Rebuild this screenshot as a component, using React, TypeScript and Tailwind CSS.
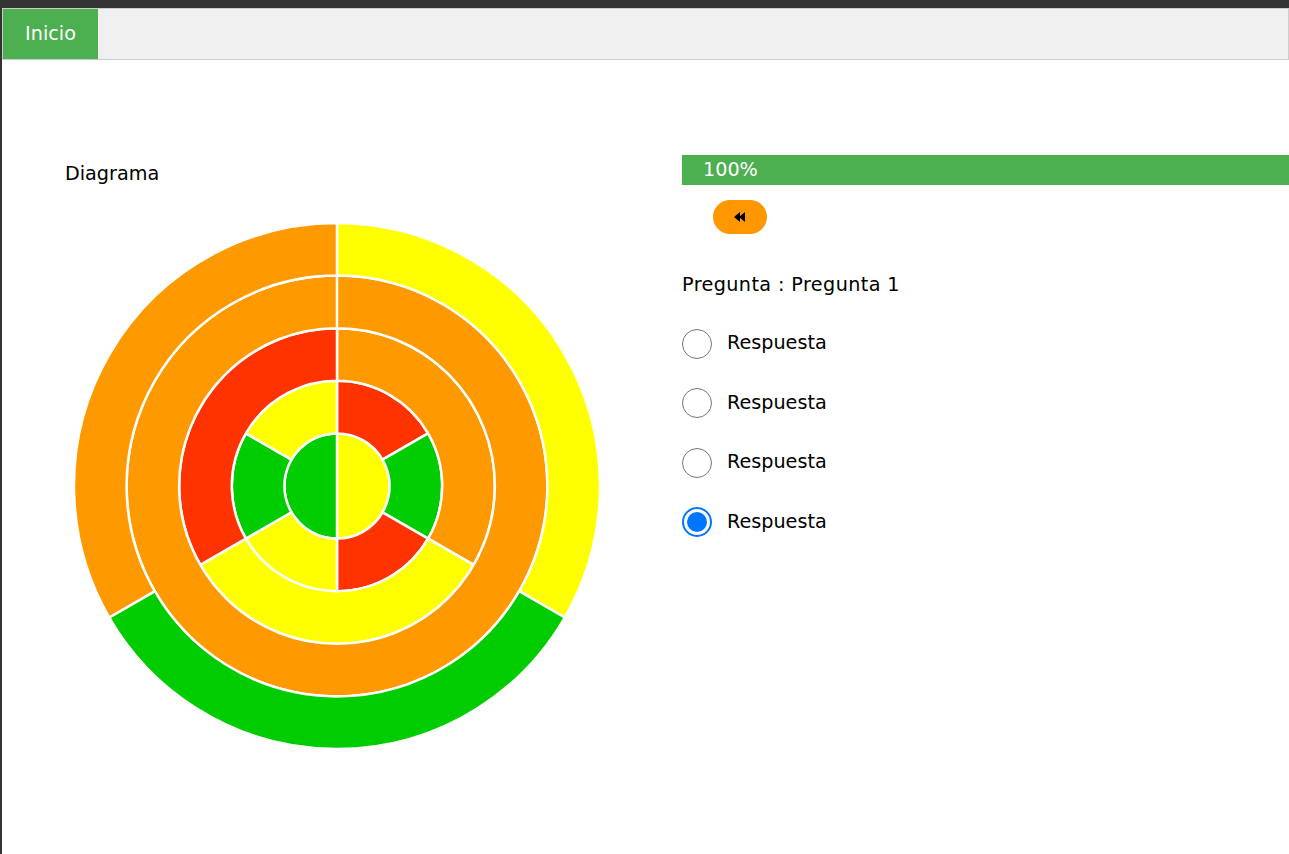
import React from "react";

const C = { o: "#ff9900", y: "#ffff00", r: "#ff3300", g: "#00cc00" };

function pt(r: number, deg: number, cx: number, cy: number) {
  const a = (deg * Math.PI) / 180;
  return [cx + r * Math.sin(a), cy - r * Math.cos(a)];
}

function arcPath(r0: number, r1: number, a0: number, a1: number, cx: number, cy: number) {
  if (a1 - a0 >= 360) {
    const [x0, y0] = pt(r1, 0, cx, cy);
    const [x1, y1] = pt(r1, 180, cx, cy);
    const [x2, y2] = pt(r0, 0, cx, cy);
    const [x3, y3] = pt(r0, 180, cx, cy);
    return `M${x0},${y0} A${r1},${r1} 0 1 1 ${x1},${y1} A${r1},${r1} 0 1 1 ${x0},${y0} L${x2},${y2} A${r0},${r0} 0 1 0 ${x3},${y3} A${r0},${r0} 0 1 0 ${x2},${y2} Z`;
  }
  const large = a1 - a0 > 180 ? 1 : 0;
  const [ox0, oy0] = pt(r1, a0, cx, cy);
  const [ox1, oy1] = pt(r1, a1, cx, cy);
  if (r0 <= 0) {
    return `M${cx},${cy} L${ox0},${oy0} A${r1},${r1} 0 ${large} 1 ${ox1},${oy1} Z`;
  }
  const [ix1, iy1] = pt(r0, a1, cx, cy);
  const [ix0, iy0] = pt(r0, a0, cx, cy);
  return `M${ox0},${oy0} A${r1},${r1} 0 ${large} 1 ${ox1},${oy1} L${ix1},${iy1} A${r0},${r0} 0 ${large} 0 ${ix0},${iy0} Z`;
}

const W = 52.6;
const rings: [number, number, string][][] = [
  [
    [0, 180, C.y],
    [180, 360, C.g],
  ],
  [
    [0, 60, C.r],
    [60, 120, C.g],
    [120, 180, C.r],
    [180, 240, C.y],
    [240, 300, C.g],
    [300, 360, C.y],
  ],
  [
    [0, 120, C.o],
    [120, 240, C.y],
    [240, 360, C.r],
  ],
  [[0, 360, C.o]],
  [
    [0, 120, C.y],
    [120, 240, C.g],
    [240, 360, C.o],
  ],
];

function Chart() {
  const cx = 270;
  const cy = 270;
  return (
    <svg width={540} height={540} viewBox="0 0 540 540">
      {rings.map((ring, i) =>
        ring.map(([a0, a1, col], j) => (
          <path
            key={`${i}-${j}`}
            d={arcPath(i * W, (i + 1) * W, a0, a1, cx, cy)}
            fill={col}
            stroke="#ffffff"
            strokeWidth={2.5}
            strokeLinejoin="round"
          />
        ))
      )}
    </svg>
  );
}

function Radio({ checked }: { checked?: boolean }) {
  if (checked) {
    return (
      <span className="flex h-[30px] w-[30px] items-center justify-center rounded-full border-[2px] border-[#0075ff] bg-white">
        <span className="h-[20px] w-[20px] rounded-full bg-[#0075ff]" />
      </span>
    );
  }
  return <span className="block h-[30px] w-[30px] rounded-full border border-[#767676] bg-white" />;
}

export default function App() {
  return (
    <div
      className="h-[854px] w-[1289px] overflow-hidden border-l-2 border-t-8 border-[#333333] bg-white text-black"
      style={{ fontFamily: '"DejaVu Sans", Verdana, sans-serif' }}
    >
      <div className="flex h-[52px] border border-[#cccccc] bg-[#f0f0f0]">
        <div className="flex h-[50px] w-[95px] items-center justify-center bg-[#4caf50] text-[19.2px] text-white">
          Inicio
        </div>
      </div>
      <div className="flex">
        <div className="w-[680px] shrink-0 pl-[63px] pt-[102px]">
          <div className="text-[19.2px] leading-[23px]">Diagrama</div>
          <div className="ml-[2px] mt-[31px]">
            <Chart />
          </div>
        </div>
        <div className="flex-1 pt-[95px]">
          <div className="flex h-[30px] items-center bg-[#4caf50] pl-[21px] text-[19.2px] text-white">100%</div>
          <button className="ml-[31px] mt-[15px] flex h-[34px] w-[54px] items-center justify-center rounded-full bg-[#ff9800]">
            <svg width="12" height="10" viewBox="0 0 12 10">
              <polygon points="0,5 6,0 6,10" fill="#000" />
              <polygon points="5,5 11,0 11,10" fill="#000" />
            </svg>
          </button>
          <div className="mt-[39px] text-[19.2px] leading-[23px] tracking-[0.4px]">Pregunta : Pregunta 1</div>
          <div className="mt-[18px] flex flex-col">
            {[false, false, false, true].map((c, i) => (
              <div key={i} className="flex h-[59.5px] items-center">
                <Radio checked={c} />
                <span className="ml-[15px] text-[19.2px]">Respuesta</span>
              </div>
            ))}
          </div>
        </div>
      </div>
    </div>
  );
}
